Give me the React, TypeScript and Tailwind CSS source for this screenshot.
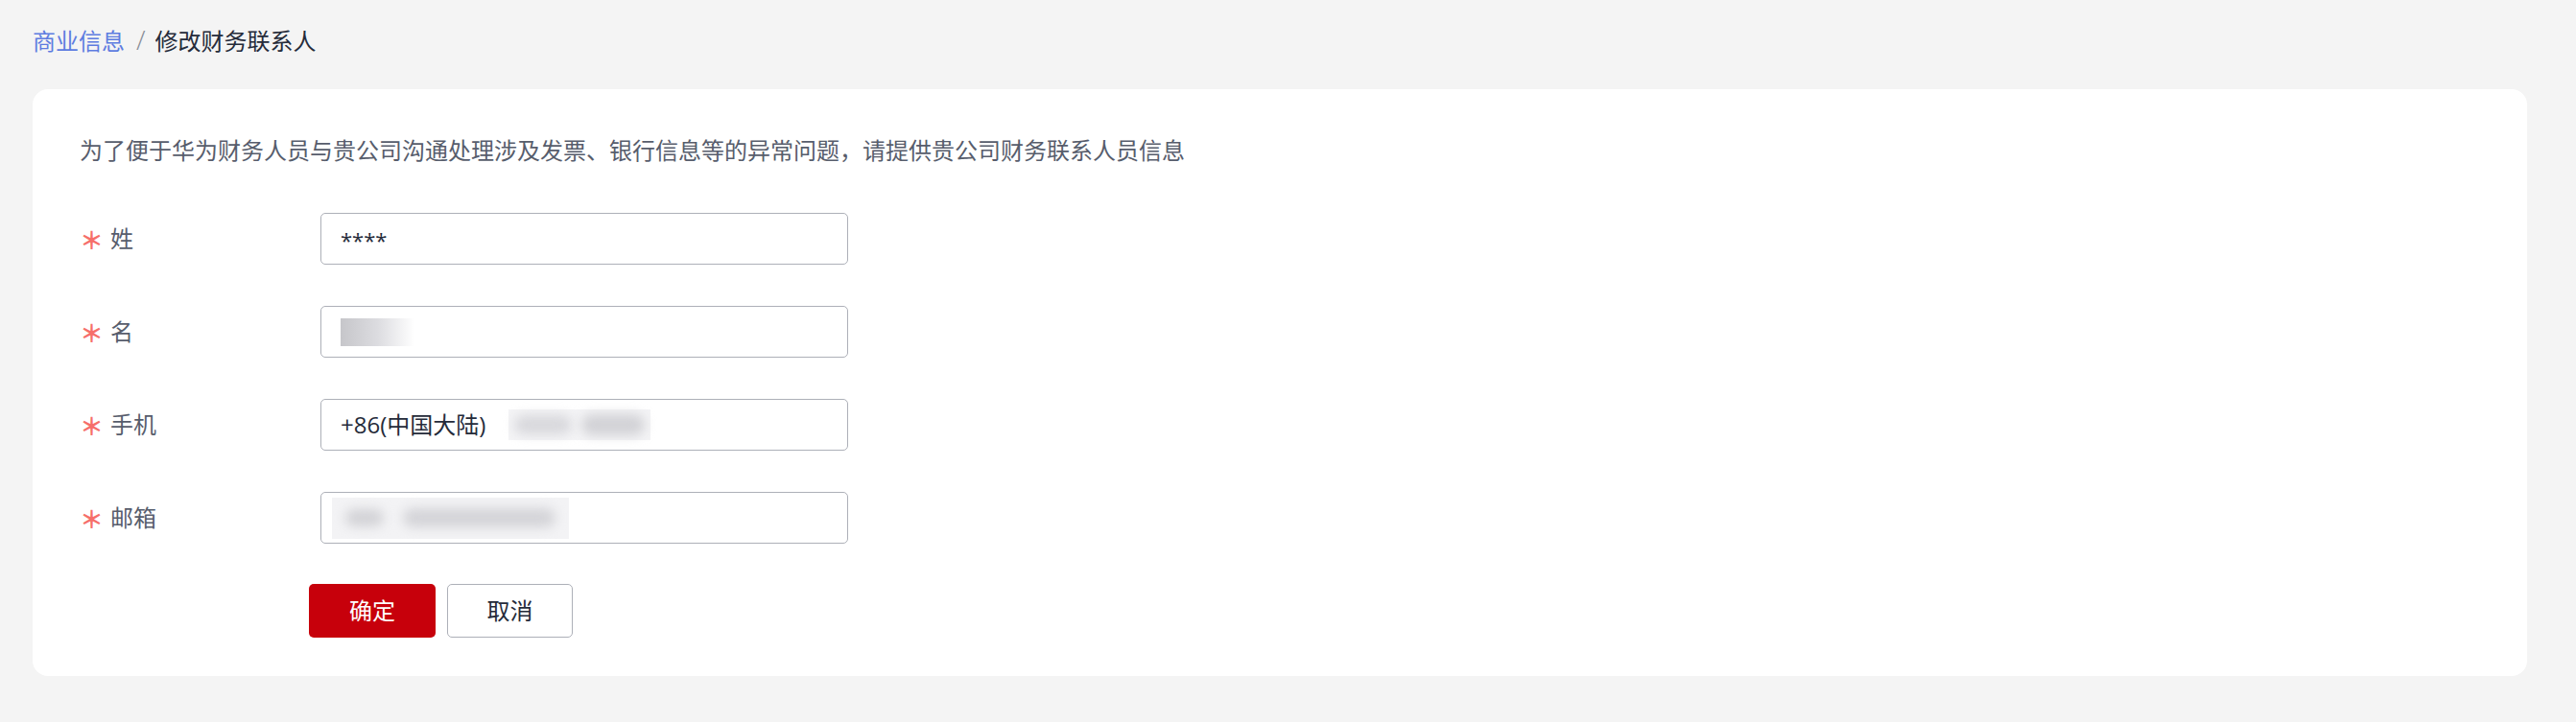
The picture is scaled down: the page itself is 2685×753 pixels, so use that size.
import React from "react";

const FONT = '"Open Sans", "Noto Sans CJK SC", sans-serif';

const rows = [
  { label: "姓", kind: "text", value: "****" },
  { label: "名", kind: "name" },
  { label: "手机", kind: "phone" },
  { label: "邮箱", kind: "email" },
];

function Field({ row }: { row: (typeof rows)[number] }) {
  return (
    <div className="flex items-center h-[54px]">
      <div className="w-[251px] flex items-center text-[24px] text-[#575d6c]">
        <span
          className="text-[#f66f6a] w-[32px] text-[25px] font-bold leading-none"
          style={{ fontFamily: '"Noto Sans CJK SC", sans-serif' }}
        >
          ＊
        </span>
        <span>{row.label}</span>
      </div>
      <div className="w-[550px] h-[54px] border-[1.5px] border-[#adb0b8] rounded-[5px] bg-white flex items-center px-[20px] text-[24px] text-[#252b3a] overflow-hidden">
        {row.kind === "text" && <span className="text-[22px] pt-[2px]">{row.value}</span>}
        {row.kind === "name" && (
          <div className="w-[77px] h-[29px] bg-gradient-to-r from-[#c6c6ca] via-[#dcdce0] to-white" />
        )}
        {row.kind === "phone" && (
          <>
            <span>+86(中国大陆)</span>
            <div className="ml-[24px] w-[148px] h-[32px] bg-[#f4f4f6] flex items-center gap-[10px] px-[6px]">
              <div className="w-[60px] h-[20px] bg-[#d8d8dc] blur-[6px] rounded-full" />
              <div className="flex-1 h-[22px] bg-[#d2d2d6] blur-[6px] rounded-full" />
            </div>
          </>
        )}
        {row.kind === "email" && (
          <div className="-ml-[9px] w-[247px] h-[43px] bg-[#f3f3f5] flex items-center gap-[20px] px-[14px]">
            <div className="w-[40px] h-[18px] bg-[#d2d2d6] blur-[6px] rounded-full" />
            <div className="flex-1 h-[20px] bg-[#d4d4d8] blur-[6px] rounded-full" />
          </div>
        )}
      </div>
    </div>
  );
}

export default function App() {
  return (
    <div className="min-h-[753px] w-full bg-[#f4f4f4] pl-[34px] pr-[51px] pt-[25px]" style={{ fontFamily: FONT }}>
      {/* Breadcrumb */}
      <div className="flex items-center h-[36px] text-[24px]">
        <span className="text-[#5e7ce0]">商业信息</span>
        <span className="ml-[12px] mr-[10px] text-[#8a8e99] text-[28px] font-light leading-none -mt-[4px]">/</span>
        <span className="text-[#252b3a]">修改财务联系人</span>
      </div>

      {/* Card */}
      <div className="mt-[32px] bg-white rounded-[16px] pl-[49px] pt-[46px] pb-[40px]">
        <p className="text-[24px] leading-[36px] text-[#575d6c]">
          为了便于华为财务人员与贵公司沟通处理涉及发票、银行信息等的异常问题，请提供贵公司财务联系人员信息
        </p>

        <div className="mt-[47px] flex flex-col gap-[43px]">
          {rows.map((r) => (
            <Field key={r.label} row={r} />
          ))}
        </div>

        <div className="mt-[42px] ml-[239px] flex gap-[12px]">
          <button className="w-[132px] h-[56px] rounded-[5px] bg-[#c7000b] text-white text-[24px]">确定</button>
          <button className="w-[131px] h-[56px] rounded-[5px] border-[1.5px] border-[#adb0b8] bg-white text-[#252b3a] text-[24px]">
            取消
          </button>
        </div>
      </div>
    </div>
  );
}
